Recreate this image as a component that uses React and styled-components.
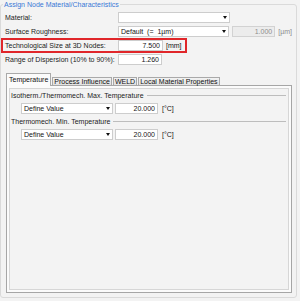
import styled, { createGlobalStyle, css } from "styled-components";

const GlobalStyle = createGlobalStyle`
  html, body { margin: 0; padding: 0; background: #f3f3f3; }
  * { box-sizing: border-box; }
`;

const Page = styled.div`
  width: 300px; height: 301px;
  padding: 0 3px 3px 0;
  background: #f3f3f3;
  font-family: "Liberation Sans", Arial, sans-serif;
  font-size: 7px; color: #141414;
  display: flex; flex-direction: column;
`;
const GroupBox = styled.fieldset`
  flex: 1; min-width: 0; min-height: 0;
  margin: 0; padding: 3px 4px 4px 0;
  border: 1px solid #dadada; border-radius: 3px;
  display: flex; flex-direction: column;
`;
const Legend = styled.legend`
  margin-left: 2px; padding: 0 1px;
  line-height: 9px; color: #3a78d6;
`;
const Form = styled.div`display: flex; flex-direction: column; gap: 3px;`;
const Row = styled.div`
  display: flex; align-items: center; gap: 3px;
  height: 11px; padding-left: 4px;
  ${({ $highlight }) => $highlight && css`
    align-self: flex-start; height: 15px;
    margin: -2px 0;
    border: 2px solid #e0262a;
    padding: 0 3px 0 2px;
  `}
`;
const Label = styled.span`width: 110px; flex-shrink: 0; white-space: nowrap; color: #1c1c1c;`;
const Select = styled.div`
  width: ${({ $w }) => $w}px; height: 11px;
  display: flex; align-items: center; justify-content: space-between;
  padding: 0 2px 0 2px;
  background: #fff; border: 1px solid #cdcdcd;
  white-space: nowrap;
`;
const Arrow = styled.span`
  width: 0; height: 0;
  border-left: 2.5px solid transparent; border-right: 2.5px solid transparent;
  border-top: 3px solid #111;
`;
const NumField = styled.div`
  width: ${({ $w }) => $w}px; height: 11px;
  display: flex; align-items: center; justify-content: flex-end;
  padding-right: 2px;
  background: ${({ $disabled }) => ($disabled ? "#ececec" : "#fff")};
  border: 1px solid ${({ $disabled }) => ($disabled ? "#d2d2d2" : "#cdcdcd")};
  color: ${({ $disabled }) => ($disabled ? "#8c8c8c" : "#141414")};
`;
const Unit = styled.span`
  margin-left: ${({ $ml }) => $ml || 0}px;
  color: ${({ $disabled }) => ($disabled ? "#8c8c8c" : "#141414")};
`;
const TabStrip = styled.div`
  display: flex; align-items: flex-end; gap: 1px;
  margin: 8px 0 0 5px;
  position: relative; z-index: 1;
`;
const Tab = styled.div`
  height: 8px; line-height: 7px;
  padding: 0 1px;
  border: 1px solid #a9a9a9; border-bottom: none;
  background: linear-gradient(#f2f2f2, #e2e2e2);
  color: #111; white-space: nowrap;
  ${({ $active }) => $active && css`
    height: 13px; line-height: 11px; margin-bottom: -1px;
    padding: 0 2px;
    background: #fbfbfb;
  `}
`;
const Panel = styled.div`
  flex: 1; display: flex;
  margin-left: 5px;
  padding: 2px;
  background: #fbfbfb;
  border: 1px solid #a6a6a6;
`;
const PanelInner = styled.div`
  flex: 1;
  padding: 2px 2px 0 1px;
  background: #f3f3f3;
  border: 1px solid #d6d6d6;
`;
const SectionHead = styled.div`
  display: flex; align-items: center; gap: 3px;
  height: 9px; margin-top: ${({ $mt }) => $mt || 0}px;
  color: #1c1c1c; white-space: nowrap;
  &::after { content: ""; flex: 1; height: 1px; background: #bdbdbd; }
`;
const SubRow = styled.div`
  display: flex; align-items: center; gap: 2px;
  height: 11px; margin-top: 3px; padding-left: 10px;
`;

const tabs = ["Temperature", "Process Influence", "WELD", "Local Material Properties"];

export default function App() {
  return (
    <>
      <GlobalStyle />
      <Page>
        <GroupBox>
          <Legend>Assign Node Material/Characteristics</Legend>
          <Form>
            <Row>
              <Label>Material:</Label>
              <Select $w={112}><span></span><Arrow /></Select>
            </Row>
            <Row>
              <Label>Surface Roughness:</Label>
              <Select $w={112}><span>Default&nbsp; (=&nbsp; 1µm)</span><Arrow /></Select>
              <NumField $w={43} $disabled>1.000</NumField>
              <Unit $disabled>[µm]</Unit>
            </Row>
            <Row $highlight>
              <Label>Technological Size at 3D Nodes:</Label>
              <NumField $w={45}>7.500</NumField>
              <Unit>[mm]</Unit>
            </Row>
            <Row>
              <Label>Range of Dispersion (10% to 90%):</Label>
              <NumField $w={44}>1.260</NumField>
            </Row>
          </Form>
          <TabStrip>
            {tabs.map((t, i) => (
              <Tab key={t} $active={i === 0}>{t}</Tab>
            ))}
          </TabStrip>
          <Panel>
            <PanelInner>
              <SectionHead>Isotherm./Thermomech. Max. Temperature</SectionHead>
              <SubRow>
                <Select $w={92}><span>Define Value</span><Arrow /></Select>
                <NumField $w={43}>20.000</NumField>
                <Unit $ml={2}>[°C]</Unit>
              </SubRow>
              <SectionHead $mt={3}>Thermomech. Min. Temperature</SectionHead>
              <SubRow>
                <Select $w={92}><span>Define Value</span><Arrow /></Select>
                <NumField $w={43}>20.000</NumField>
                <Unit $ml={2}>[°C]</Unit>
              </SubRow>
            </PanelInner>
          </Panel>
        </GroupBox>
      </Page>
    </>
  );
}
